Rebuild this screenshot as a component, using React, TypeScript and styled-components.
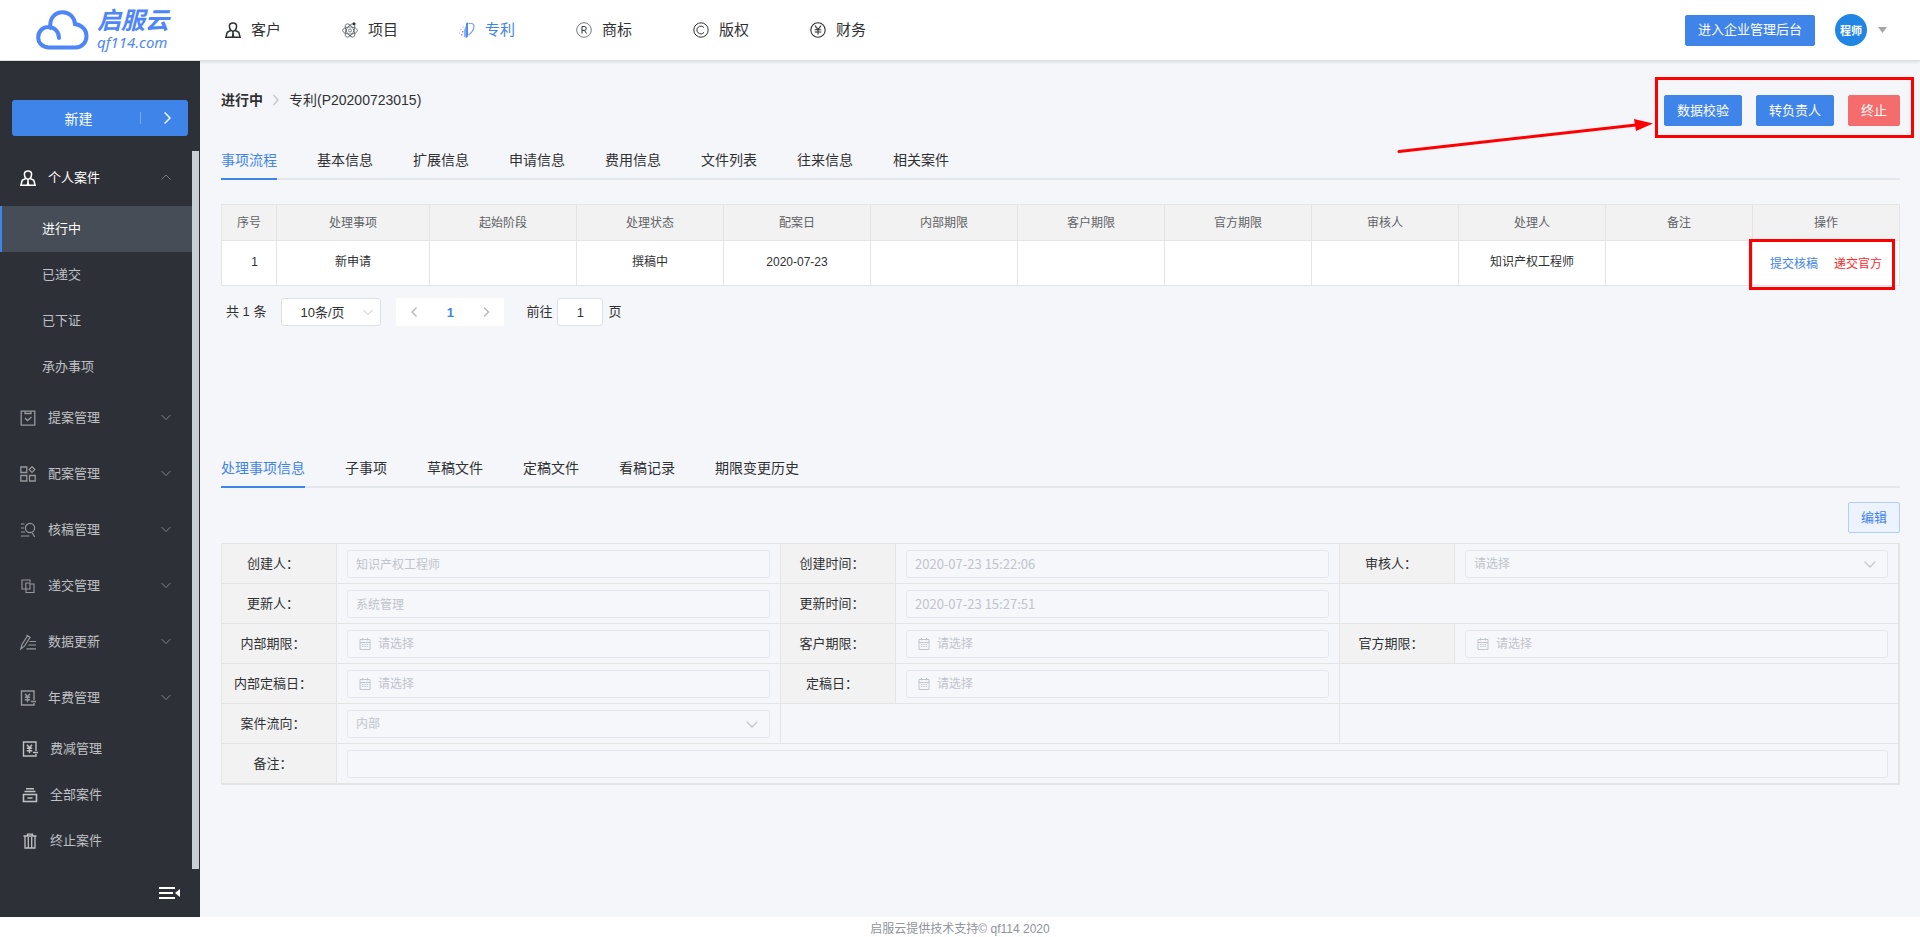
import React from 'react';
import styled, { createGlobalStyle, css } from 'styled-components';

const BLUE = '#3f84e9';
const LINE = '#e4e4e4';

const GlobalStyle = createGlobalStyle`
  * { box-sizing: border-box; }
  body {
    margin: 0;
    background: #fff;
    color: #303133;
    font-family: "Liberation Sans", "Noto Sans CJK SC", sans-serif;
    font-size: 13px;
  }
  button, input, select { font-family: inherit; }
  a { color: inherit; text-decoration: none; }
  ul { list-style: none; margin: 0; padding: 0; }
`;

const Page = styled.div`
  display: flex;
  flex-direction: column;
  min-height: 100vh;
`;

/* ---------- header ---------- */

const Header = styled.header`
  position: relative;
  z-index: 2;
  display: flex;
  align-items: center;
  height: 61px;
  padding-right: 33px;
  background: #fff;
  border-bottom: 1px solid #dedfe1;
  box-shadow: 0 1px 3px rgba(0, 0, 0, 0.12);
`;

const Logo = styled.a`
  display: flex;
  align-items: center;
  gap: 8px;
  width: 225px;
  padding-left: 36px;
  color: #4f86f7;
`;

const LogoText = styled.span`
  display: flex;
  flex-direction: column;
  font-style: italic;
`;

const LogoName = styled.strong`
  font-size: 24px;
  line-height: 24px;
  font-weight: 700;
`;

const LogoDomain = styled.span`
  font-family: "Noto Sans", sans-serif;
  font-size: 15px;
  line-height: 18px;
`;

const Nav = styled.nav`
  display: flex;
  flex: 1;
  gap: 61px;
`;

const NavLink = styled.a<{ $active?: boolean }>`
  display: flex;
  align-items: center;
  gap: 10px;
  font-size: 15px;
  line-height: 20px;
  white-space: nowrap;
  color: ${(p) => (p.$active ? BLUE : '#303133')};
`;

const Button = styled.button<{ $kind?: 'primary' | 'danger' | 'plain' }>`
  height: 31px;
  padding: 0 12px;
  border: 1px solid ${BLUE};
  border-radius: 2px;
  background: ${BLUE};
  color: #fff;
  font-size: 13px;
  line-height: 20px;
  white-space: nowrap;
  ${(p) => p.$kind === 'danger' && css`
    background: #f56c6c;
    border-color: #f56c6c;
  `}
  ${(p) => p.$kind === 'plain' && css`
    background: #ecf3fd;
    border-color: #b2cef6;
    color: ${BLUE};
  `}
`;

const Avatar = styled.button`
  width: 32px;
  height: 32px;
  margin: 0 11px 0 20px;
  padding: 0;
  border: 0;
  border-radius: 50%;
  background: #2185e4;
  color: #fff;
  font-size: 11px;
  font-weight: 700;
`;

/* ---------- sidebar ---------- */

const Body = styled.div`
  display: flex;
  flex: 1;
`;

const Sidebar = styled.aside`
  display: flex;
  flex-direction: column;
  flex: none;
  width: 200px;
  padding-top: 39px;
  background: #2e3037;
  color: #bfc1c4;
`;

const NewButton = styled.button`
  display: flex;
  align-items: center;
  height: 36px;
  margin: 0 12px 14px;
  padding: 0 15px 0 0;
  border: 0;
  border-radius: 3px;
  background: ${BLUE};
  color: #fff;
  font-size: 14px;
`;

const NewLabel = styled.span`
  flex: 1;
  padding-left: 5px;
`;

const NewArrow = styled.span`
  display: flex;
  justify-content: flex-end;
  width: 33px;
  height: 12px;
  border-left: 1px solid #76a8f0;
`;

const MenuScroll = styled.div`
  display: flex;
  flex: 1;
  padding-right: 1px;
`;

const Menu = styled.ul`
  flex: 1;
  padding-bottom: 5px;
`;

const Thumb = styled.div`
  width: 7px;
  margin-top: 1px;
  background: #c8d0d6;
`;

const MenuRow = styled.a<{ $open?: boolean; $single?: boolean }>`
  display: flex;
  align-items: center;
  gap: 12px;
  height: ${(p) => (p.$single ? 46 : 56)}px;
  padding: 0 21px 0 ${(p) => (p.$single ? 22 : 20)}px;
  line-height: 20px;
  color: ${(p) => (p.$open ? '#fff' : 'inherit')};
`;

const MenuIcon = styled.span<{ $dim?: boolean }>`
  display: flex;
  color: ${(p) => (p.$dim ? '#96989c' : 'inherit')};
`;

const MenuLabel = styled.span`
  flex: 1;
`;

const MenuMark = styled.span`
  display: flex;
  padding-bottom: 2px;
  color: #8b8d92;
`;

const SubItem = styled.a<{ $active?: boolean }>`
  display: flex;
  align-items: center;
  height: 46px;
  padding: 0 0 4px 40px;
  border-left: 2px solid ${(p) => (p.$active ? BLUE : 'transparent')};
  background: ${(p) => (p.$active ? '#474d56' : 'transparent')};
  color: ${(p) => (p.$active ? '#fff' : 'inherit')};
`;

const Collapse = styled.button`
  display: flex;
  align-items: center;
  justify-content: flex-end;
  height: 48px;
  padding: 0 20px 0 0;
  border: 0;
  background: none;
  color: #fff;
`;

/* ---------- main ---------- */

const Main = styled.main`
  flex: 1;
  min-width: 0;
  padding: 29px 20px 20px 21px;
  background: #f5f6fa;
`;

const TitleRow = styled.div`
  display: flex;
  justify-content: space-between;
  align-items: flex-start;
`;

const Crumbs = styled.div`
  display: flex;
  align-items: center;
  gap: 10px;
  font-size: 14px;
  line-height: 20px;
`;

const Actions = styled.div`
  position: relative;
  display: flex;
  gap: 14px;
  margin-top: 5px;
`;

const Highlight = styled.span<{ $inset: string }>`
  position: absolute;
  inset: ${(p) => p.$inset};
  border: 3px solid #fe0000;
  pointer-events: none;
`;

const Arrow = styled.svg`
  position: absolute;
  top: 22px;
  right: 246px;
  pointer-events: none;
`;

const Tabs = styled.div`
  display: flex;
  gap: 40px;
  height: 40px;
  margin-top: 14px;
  border-bottom: 2px solid #e4e7ed;
`;

const Tab = styled.button<{ $active?: boolean }>`
  height: 40px;
  padding: 2px 0 0;
  border: 0;
  border-bottom: 2px solid ${(p) => (p.$active ? BLUE : 'transparent')};
  background: none;
  color: ${(p) => (p.$active ? BLUE : '#303133')};
  font-size: 14px;
  line-height: 20px;
  white-space: nowrap;
`;

const FlowTable = styled.table`
  width: 100%;
  margin-top: 24px;
  table-layout: fixed;
  border-collapse: collapse;
  font-size: 12px;
  line-height: 18px;
  text-align: center;
`;

const Col = styled.col<{ $w?: number }>`
  width: ${(p) => (p.$w ? `${p.$w}px` : 'auto')};
`;

const Th = styled.th`
  height: 36px;
  padding: 0;
  border: 1px solid ${LINE};
  background: #f2f2f2;
  color: #606266;
  font-weight: 400;
`;

const Td = styled.td<{ $index?: boolean }>`
  position: relative;
  height: 45px;
  padding: 0 0 2px ${(p) => (p.$index ? 11 : 0)}px;
  border: 1px solid ${LINE};
  background: #fff;
`;

const RowLinks = styled.div`
  display: flex;
  justify-content: center;
  gap: 16px;
  padding-top: 4px;
`;

const RowLink = styled.a<{ $danger?: boolean }>`
  color: ${(p) => (p.$danger ? '#ff2a2a' : BLUE)};
`;

const Pagination = styled.div`
  display: flex;
  align-items: center;
  height: 28px;
  margin: 12px 0 122px;
  padding-left: 5px;
  line-height: 20px;
`;

const SizeBox = styled.span`
  position: relative;
  display: flex;
  align-items: center;
  width: 100px;
  margin: 0 15px;
`;

const SizeSelect = styled.select`
  width: 100%;
  height: 28px;
  padding: 0 24px 0 18px;
  appearance: none;
  border: 1px solid #dcdfe6;
  border-radius: 3px;
  background: #fff;
  color: #303133;
  font-size: 13px;
`;

const SelectMark = styled.span`
  position: absolute;
  right: 8px;
  display: flex;
  color: #c0c4cc;
  pointer-events: none;
`;

const Pager = styled.div`
  display: flex;
  margin-right: 22px;
  border-radius: 2px;
  background: #fff;
`;

const PageButton = styled.button<{ $active?: boolean }>`
  display: flex;
  align-items: center;
  justify-content: center;
  width: 36px;
  height: 28px;
  padding: 0;
  border: 0;
  background: none;
  color: ${(p) => (p.$active ? BLUE : '#b4b8bf')};
  font-size: 13px;
  font-weight: 700;
`;

const Jump = styled.label`
  display: flex;
  align-items: center;
  gap: 5px;
`;

const JumpInput = styled.input`
  width: 46px;
  height: 28px;
  padding: 0;
  border: 1px solid #dcdfe6;
  border-radius: 3px;
  background: #fff;
  color: #303133;
  font-size: 13px;
  text-align: center;
`;

const EditRow = styled.div`
  display: flex;
  justify-content: flex-end;
  margin: 14px 0 10px;
`;

const FormGrid = styled.form`
  display: grid;
  grid-template-columns: repeat(3, 115px 1fr);
  grid-auto-rows: 40px;
  border: 1px solid ${LINE};
`;

const LabelCell = styled.label`
  display: flex;
  align-items: center;
  justify-content: center;
  padding: 0 12px 2px 0;
  border: solid ${LINE};
  border-width: 0 1px 1px 0;
  background: #f2f2f2;
  white-space: nowrap;
`;

const FieldCell = styled.div<{ $span?: number }>`
  display: flex;
  align-items: center;
  grid-column: span ${(p) => p.$span ?? 1};
  min-width: 0;
  padding: 0 10px;
  border: solid ${LINE};
  border-width: 0 1px 1px 0;
`;

const FieldBox = styled.div`
  display: flex;
  align-items: center;
  flex: 1;
  gap: 7px;
  min-width: 0;
  height: 28px;
  padding: 0 11px 0 8px;
  border: 1px solid #e4e7ed;
  border-radius: 3px;
  background: #f5f7fa;
  color: #c0c4cc;
`;

const CalendarSlot = styled.span`
  display: flex;
  padding-left: 3px;
`;

const fieldText = css`
  flex: 1;
  min-width: 0;
  height: 26px;
  padding: 0;
  border: 0;
  background: none;
  color: #c0c4cc;
  opacity: 1;
  font-size: 12px;
`;

const FieldInput = styled.input<{ $stamp?: boolean }>`
  ${fieldText}
  ${(p) => p.$stamp && css`
    font-family: "Noto Sans CJK SC", sans-serif;
    font-size: 13px;
  `}
  &::placeholder { color: #c0c4cc; opacity: 1; }
`;

const FieldSelect = styled.select`
  ${fieldText}
  appearance: none;
`;

const Footer = styled.footer`
  height: 20px;
  padding-top: 5px;
  color: #909399;
  font-size: 12px;
  line-height: 15px;
  text-align: center;
`;

/* ---------- icons ---------- */

const Svg = ({ size = 16, children, w = 1.2 }: { size?: number; w?: number; children: React.ReactNode }) => (
  <svg width={size} height={size} viewBox="0 0 16 16" fill="none" stroke="currentColor" strokeWidth={w} aria-hidden="true">
    {children}
  </svg>
);

const Chevron = ({ dir, size = 10, w = 1 }: { dir: 'up' | 'down' | 'left' | 'right'; size?: number; w?: number }) => {
  const d = { up: 'M.5 7.500 5 3l4.500 4.500', down: 'M.5 3 5 7.500 9.500 3', left: 'M7.500 .5 3 5l4.500 4.500', right: 'M3 .5 7.500 5 3 9.500' }[dir];
  return (
    <svg width={size} height={size} viewBox="0 0 10 10" fill="none" stroke="currentColor" strokeWidth={w} aria-hidden="true">
      <path d={d} />
    </svg>
  );
};

const UserIcon = () => (
  <Svg w={1.5}>
    <path d="M5.800 8.200C4.800 7 4.400 5.500 4.400 4.300 4.400 2.200 5.800 .9 8 .9s3.600 1.300 3.600 3.400c0 1.200-.4 2.700-1.400 3.900M6.200 8.300 2.200 10.200.9 15.200h14.200l-1.300-5-4-1.900" />
    <path d="M6.200 8 8 10l1.800-2M8 10v5" />
    <path d="M8 10.500 9.500 15h-3z" fill="currentColor" stroke="none" />
  </Svg>
);

const AtomIcon = () => (
  <Svg w={0.8}>
    <g stroke="#5b5d61">
      <ellipse cx="8" cy="8.500" rx="7.400" ry="3.600" />
      <ellipse cx="8" cy="8.500" rx="7.400" ry="3.600" transform="rotate(60 8 8.500)" />
      <ellipse cx="8" cy="8.500" rx="7.400" ry="3.600" transform="rotate(120 8 8.500)" />
      <circle cx="8" cy="8.500" r="1.500" />
    </g>
    <circle cx="12" cy="1.800" r="1.500" fill="currentColor" stroke="none" />
  </Svg>
);

const PatentIcon = () => (
  <svg width="16" height="16" viewBox="0 0 16 16" fill="none" aria-hidden="true">
    <path d="M9.500 1.500h2.700c2.200 0 3.200 1.600 2.700 3.800-.6 2.800-2.700 5.700-5.400 7.700" stroke="#7d9cf0" strokeWidth="1.200" />
    <path d="M7 1.500 9 0v14.500L7 16z" fill="#4d8df0" />
    <path d="M7 3.500V16l-2-1.500V8z" fill="#86b4f5" />
    <g fill="#a68df0">
      <rect x="3.500" y="4.500" width="1" height="1" />
      <rect x="1.500" y="7" width="1" height="1" />
      <rect x="3" y="9" width="1.500" height="1.500" />
      <rect x="0" y="10.500" width="1" height="1" />
      <rect x="2" y="12" width="1.500" height="1.500" />
    </g>
  </svg>
);

const TrademarkIcon = () => (
  <Svg w={1}>
    <circle cx="8" cy="8" r="7.300" stroke="#77797d" />
    <path d="M6 11.500v-7h2.300a1.900 1.900 0 0 1 0 3.900H6M8.500 8.400l2 3.100" />
  </Svg>
);

const CopyrightIcon = () => (
  <Svg w={1}>
    <circle cx="8" cy="8" r="7.200" />
    <path d="M11 5.700a3.900 3.900 0 1 0 0 4.600" />
  </Svg>
);

const YuanIcon = () => (
  <Svg w={1.1}>
    <circle cx="8" cy="8" r="7.200" />
    <path d="M5 3.700 8 7.500l3-3.800M8 7.500v5M4.700 7.700h6.600M4.700 10h6.600" />
  </Svg>
);

const ProposalIcon = () => (
  <Svg w={1.3}>
    <path d="M1.200 1.200h13.600v14H1.200zM5 .8v2.700h6V.8M5 8l2.500 2.500L11.500 7" />
  </Svg>
);

const AssignIcon = () => (
  <Svg w={1.3}>
    <path d="M.8 1h6v5.500h-6zM.8 9.500h6V15h-6zM9.500 9.500h5.700V15H9.500zM12 .8l2.800 2.800L12 6.400 9.200 3.600z" />
  </Svg>
);

const ReviewIcon = () => (
  <Svg w={1.2}>
    <path d="M1 2h3.500M1 6h3M1 10h4M1 14h8.500M12.500 11l2 4" />
    <circle cx="10" cy="6" r="4.600" />
  </Svg>
);

const SubmitIcon = () => (
  <Svg w={1.1}>
    <path d="M6 11H2V2h8v2M10 11H5.800V5H10v6zM10 6h4v8.500H6V11" />
  </Svg>
);

const UpdateIcon = () => (
  <Svg w={1.2}>
    <path d="M.8 15 2 10.500 7.500 1.800l2.500 1.600-5.600 8.800zM6.500 1l3.800 2.400M9.500 7.500H16M8.500 11H16M6.500 14.800H16" />
  </Svg>
);

const FeeIcon = () => (
  <Svg w={1.4}>
    <path d="M14 10V1H1.500v14H14v-2M5 3.800l2.500 3 2.500-3M7.500 6.800v5.500M4.800 7.300h5.400M4.800 9.800h5.400M11 11.500h5" />
  </Svg>
);

const AllIcon = () => (
  <Svg w={1.6}>
    <path d="M4 1.800h8M2.500 4.500h11M1.500 7.500h13v7h-13zM5.500 11h5" />
  </Svg>
);

const TrashIcon = () => (
  <Svg w={1.3}>
    <path d="M1.500 3h13M5.500 2.500V1.200h5v1.300M3 3v12h10V3M6.300 4v11M9.700 4v11" />
  </Svg>
);

const CalendarIcon = () => (
  <svg width="12" height="12" viewBox="0 0 12 12" fill="none" stroke="currentColor" aria-hidden="true">
    <path d="M1 1.500h10v10H1zM1 4.500h10M3.500 0v2.500M8.500 0v2.500" />
    <path d="M3 6.500h6.500M3 8.500h6.500" strokeDasharray="1.500 .8" />
  </svg>
);

const CloudLogo = () => (
  <svg width="53" height="40" viewBox="0 0 53 40" fill="none" stroke="currentColor" strokeWidth="4" strokeLinecap="round" aria-hidden="true">
    <path d="M14.500 18C13 8.500 19 2.300 26.500 2.300c7 0 12 5 12.500 11.700C45.500 15 50.500 19.500 50.500 26c0 6.500-4.500 11.500-11 11.500H13C6.500 37.500 2.200 33 2.200 27.500c0-6 4.300-10.500 10-10.500 6.300 0 10.800 4.500 10.800 11" />
  </svg>
);

/* ---------- data ---------- */

const navItems = [
  { text: '客户', icon: <UserIcon /> },
  { text: '项目', icon: <AtomIcon /> },
  { text: '专利', icon: <PatentIcon />, active: true },
  { text: '商标', icon: <TrademarkIcon /> },
  { text: '版权', icon: <CopyrightIcon /> },
  { text: '财务', icon: <YuanIcon /> },
];

const subItems = ['进行中', '已递交', '已下证', '承办事项'];

const groups = [
  { text: '提案管理', icon: <ProposalIcon /> },
  { text: '配案管理', icon: <AssignIcon /> },
  { text: '核稿管理', icon: <ReviewIcon /> },
  { text: '递交管理', icon: <SubmitIcon /> },
  { text: '数据更新', icon: <UpdateIcon /> },
  { text: '年费管理', icon: <FeeIcon /> },
];

const singles = [
  { text: '费减管理', icon: <FeeIcon /> },
  { text: '全部案件', icon: <AllIcon /> },
  { text: '终止案件', icon: <TrashIcon /> },
];

const caseTabs = ['事项流程', '基本信息', '扩展信息', '申请信息', '费用信息', '文件列表', '往来信息', '相关案件'];
const taskTabs = ['处理事项信息', '子事项', '草稿文件', '定稿文件', '看稿记录', '期限变更历史'];
const columns = ['序号', '处理事项', '起始阶段', '处理状态', '配案日', '内部期限', '客户期限', '官方期限', '审核人', '处理人', '备注', '操作'];
const row = ['1', '新申请', '', '撰稿中', '2020-07-23', '', '', '', '', '知识产权工程师', ''];

type Item =
  | { kind: 'text' | 'stamp' | 'date' | 'select'; label: string; value?: string; span?: number }
  | { kind: 'empty' };

const fields: Item[] = [
  { kind: 'text', label: '创建人', value: '知识产权工程师' },
  { kind: 'stamp', label: '创建时间', value: '2020-07-23 15:22:06' },
  { kind: 'select', label: '审核人', value: '请选择' },
  { kind: 'text', label: '更新人', value: '系统管理' },
  { kind: 'stamp', label: '更新时间', value: '2020-07-23 15:27:51' },
  { kind: 'empty' },
  { kind: 'date', label: '内部期限' },
  { kind: 'date', label: '客户期限' },
  { kind: 'date', label: '官方期限' },
  { kind: 'date', label: '内部定稿日' },
  { kind: 'date', label: '定稿日' },
  { kind: 'empty' },
  { kind: 'select', label: '案件流向', value: '内部' },
  { kind: 'empty' },
  { kind: 'empty' },
  { kind: 'text', label: '备注', value: '', span: 5 },
];

const TabBar = ({ items }: { items: string[] }) => (
  <Tabs role="tablist">
    {items.map((t, i) => (
      <Tab key={t} type="button" role="tab" aria-selected={i === 0} $active={i === 0}>{t}</Tab>
    ))}
  </Tabs>
);

const Field = ({ item, id }: { item: Item; id: string }) => {
  if (item.kind === 'empty') return <FieldCell $span={2} />;
  return (
    <>
      <LabelCell htmlFor={id}>{item.label}：</LabelCell>
      <FieldCell $span={item.span}>
        <FieldBox>
          {item.kind === 'date' && <CalendarSlot><CalendarIcon /></CalendarSlot>}
          {item.kind === 'select' ? (
            <>
              <FieldSelect id={id} disabled><option>{item.value}</option></FieldSelect>
              <Chevron dir="down" size={12} w={1.1} />
            </>
          ) : item.kind === 'date' ? (
            <FieldInput id={id} placeholder="请选择" disabled />
          ) : (
            <FieldInput id={id} defaultValue={item.value} $stamp={item.kind === 'stamp'} disabled />
          )}
        </FieldBox>
      </FieldCell>
    </>
  );
};

export default function App() {
  return (
    <Page>
      <GlobalStyle />
      <Header>
        <Logo href="#">
          <CloudLogo />
          <LogoText>
            <LogoName>启服云</LogoName>
            <LogoDomain>qf114.com</LogoDomain>
          </LogoText>
        </Logo>
        <Nav>
          {navItems.map((n) => (
            <NavLink key={n.text} href="#" $active={n.active}>{n.icon}{n.text}</NavLink>
          ))}
        </Nav>
        <Button type="button">进入企业管理后台</Button>
        <Avatar type="button">程师</Avatar>
        <svg width="9" height="6" viewBox="0 0 9 6" fill="#a3a5a8" aria-hidden="true"><path d="M0 0h9L4.500 6z" /></svg>
      </Header>

      <Body>
        <Sidebar>
          <NewButton type="button">
            <NewLabel>新建</NewLabel>
            <NewArrow><Chevron dir="right" size={12} w={1.2} /></NewArrow>
          </NewButton>
          <MenuScroll>
            <Menu>
              <li>
                <MenuRow href="#" $open>
                  <MenuIcon><UserIcon /></MenuIcon>
                  <MenuLabel>个人案件</MenuLabel>
                  <MenuMark><Chevron dir="up" w={0.8} /></MenuMark>
                </MenuRow>
                <ul>
                  {subItems.map((s, i) => (
                    <li key={s}><SubItem href="#" $active={i === 0}>{s}</SubItem></li>
                  ))}
                </ul>
              </li>
              {groups.map((g) => (
                <li key={g.text}>
                  <MenuRow href="#">
                    <MenuIcon $dim>{g.icon}</MenuIcon>
                    <MenuLabel>{g.text}</MenuLabel>
                    <MenuMark><Chevron dir="down" w={0.9} /></MenuMark>
                  </MenuRow>
                </li>
              ))}
              {singles.map((s) => (
                <li key={s.text}>
                  <MenuRow href="#" $single>
                    <MenuIcon>{s.icon}</MenuIcon>
                    <MenuLabel>{s.text}</MenuLabel>
                  </MenuRow>
                </li>
              ))}
            </Menu>
            <Thumb />
          </MenuScroll>
          <Collapse type="button" aria-label="收起菜单">
            <svg width="21" height="12" viewBox="0 0 21 12" fill="currentColor" aria-hidden="true">
              <path d="M0 0h16v2H0zM0 5h14v2H0zM0 10h16v2H0zM21 2v8l-5-4z" />
            </svg>
          </Collapse>
        </Sidebar>

        <Main>
          <TitleRow>
            <Crumbs>
              <strong>进行中</strong>
              <svg width="6" height="12" viewBox="0 0 6 12" fill="none" stroke="#c0c4cc" strokeWidth="1.300" aria-hidden="true"><path d="M.5 1 5 6 .5 11" /></svg>
              <span>专利(P20200723015)</span>
            </Crumbs>
            <Actions>
              <Button type="button">数据校验</Button>
              <Button type="button">转负责人</Button>
              <Button type="button" $kind="danger">终止</Button>
              <Highlight $inset="-18px -14px -12px -9px" />
              <Arrow width="258" height="38" viewBox="0 0 258 38" aria-hidden="true">
                <path d="M3 34.500 240 8" stroke="#fe0000" strokeWidth="3" strokeLinecap="round" />
                <path d="M238 2 257 6.500 240 14z" fill="#fe0000" />
              </Arrow>
            </Actions>
          </TitleRow>

          <TabBar items={caseTabs} />

          <FlowTable>
            <colgroup>
              {columns.map((c, i) => <Col key={c} $w={i === 0 ? 55 : i === 1 ? 153 : undefined} />)}
            </colgroup>
            <thead>
              <tr>{columns.map((c) => <Th key={c} scope="col">{c}</Th>)}</tr>
            </thead>
            <tbody>
              <tr>
                {row.map((c, i) => <Td key={columns[i]} $index={i === 0}>{c}</Td>)}
                <Td>
                  <RowLinks>
                    <RowLink href="#">提交核稿</RowLink>
                    <RowLink href="#" $danger>递交官方</RowLink>
                  </RowLinks>
                  <Highlight $inset="-2px 4px -5px -4px" />
                </Td>
              </tr>
            </tbody>
          </FlowTable>

          <Pagination>
            <span>共 1 条</span>
            <SizeBox>
              <SizeSelect aria-label="每页条数"><option>10条/页</option></SizeSelect>
              <SelectMark><Chevron dir="down" /></SelectMark>
            </SizeBox>
            <Pager>
              <PageButton type="button" aria-label="上一页"><Chevron dir="left" w={1.4} /></PageButton>
              <PageButton type="button" $active>1</PageButton>
              <PageButton type="button" aria-label="下一页"><Chevron dir="right" w={1.4} /></PageButton>
            </Pager>
            <Jump>前往<JumpInput defaultValue="1" />页</Jump>
          </Pagination>

          <TabBar items={taskTabs} />

          <EditRow><Button type="button" $kind="plain">编辑</Button></EditRow>

          <FormGrid>
            {fields.map((f, i) => <Field key={i} item={f} id={`field-${i}`} />)}
          </FormGrid>
        </Main>
      </Body>

      <Footer>启服云提供技术支持© qf114 2020</Footer>
    </Page>
  );
}
